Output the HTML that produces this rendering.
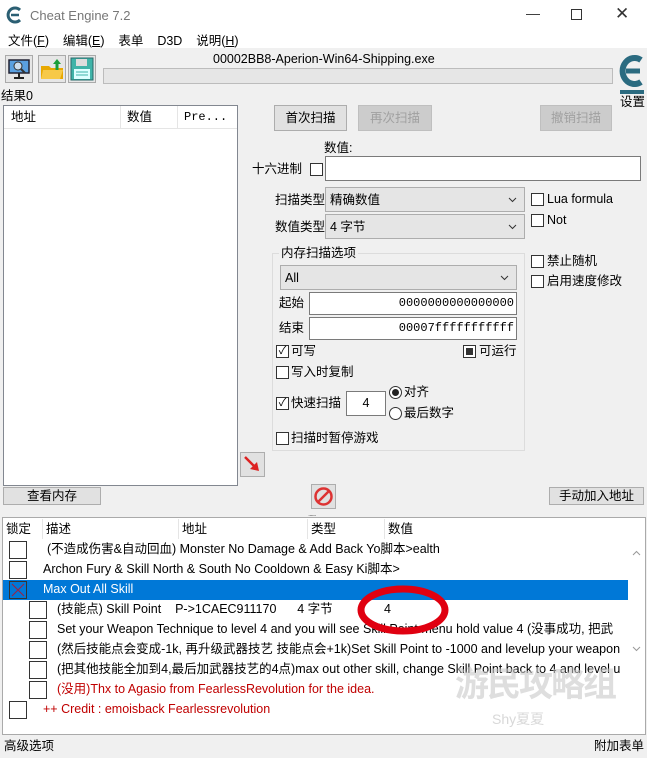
<!DOCTYPE html>
<html><head><meta charset="utf-8"><style>
*{margin:0;padding:0;box-sizing:border-box}
body{width:647px;height:758px;background:#f0f0f0;position:relative;overflow:hidden;font-family:"Liberation Sans","Noto Sans CJK SC",sans-serif;font-size:12.5px;color:#000}
.a{position:absolute;white-space:nowrap;line-height:15px}
.btn{position:absolute;background:#e1e1e1;border:1px solid #adadad;text-align:center}
.dis{color:#a0a0a0;background:#cccccc;border-color:#bfbfbf}
.cb{position:absolute;width:13px;height:13px;border:1px solid #333;background:#fff}
.in{position:absolute;background:#fff;border:1px solid #7a7a7a}
.sel{position:absolute;background:#e5e5e5;border:1px solid #adadad}
.sel svg{position:absolute;right:7px;top:9px}
.sel span{line-height:15px}
.rc{position:absolute;width:18px;height:18px;border:1px solid #333;background:#fff}
.row{position:absolute;left:0;height:20px;line-height:19px;white-space:nowrap}
</style></head><body>
<div class="a" style="left:0;top:0;width:647px;height:48px;background:#fff"></div>
<svg class="a" style="left:6px;top:6px" width="18" height="18" viewBox="0 0 18 18"><path d="M14 4 A7 7 0 1 0 14 14" stroke="#2b5f73" stroke-width="3" fill="none"/><path d="M5 9h8" stroke="#2b5f73" stroke-width="2.5"/></svg>
<div class="a" style="left:30px;top:8px;font-size:13px;color:#777">Cheat Engine 7.2</div>
<div class="a" style="left:526px;top:6px;font-size:14px;color:#333">—</div>
<div class="a" style="left:571px;top:9px;width:11px;height:11px;border:1px solid #333"></div>
<div class="a" style="left:615px;top:6px;font-size:17px;color:#333">✕</div>
<div class="a" style="left:8px;top:34px;font-size:12.5px">文件(<u>F</u>)&nbsp;&nbsp;&nbsp;&nbsp;编辑(<u>E</u>)&nbsp;&nbsp;&nbsp;&nbsp;表单&nbsp;&nbsp;&nbsp;&nbsp;D3D&nbsp;&nbsp;&nbsp;&nbsp;说明(<u>H</u>)</div>
<div class="a" style="left:5px;top:55px;width:28px;height:28px;border:1px solid #aaa;background:#e6e6e6"><svg width="26" height="26"><rect x="3" y="4" width="20" height="13" fill="#5aa0e0" stroke="#223" stroke-width="1.5"/><circle cx="12" cy="10" r="4" fill="#cde" stroke="#333"/><path d="M15 13l4 4" stroke="#333" stroke-width="2"/><path d="M13 17v4M8 22h10" stroke="#222" stroke-width="2"/></svg></div>
<div class="a" style="left:38px;top:55px;width:28px;height:28px;border:1px solid #aaa;background:#e6e6e6"><svg width="26" height="26"><path d="M2 10h8l2 2h12v11H2z" fill="#e8a800"/><path d="M4 14h20l-3 9H2z" fill="#f7c948"/><path d="M18 3l-4 5h2.5v6h3V8H22z" fill="#1a9e3a"/></svg></div>
<div class="a" style="left:68px;top:55px;width:28px;height:28px;border:1px solid #aaa;background:#e6e6e6"><svg width="26" height="26"><rect x="2" y="2" width="22" height="22" fill="#3fb3a8" stroke="#2a6a6a"/><rect x="7" y="3" width="11" height="7" fill="#ddd"/><rect x="5" y="13" width="16" height="10" fill="#dff"/><path d="M7 16h12M7 19h12" stroke="#3fb3a8"/></svg></div>
<div class="a" style="left:213px;top:52px;font-size:12.5px">00002BB8-Aperion-Win64-Shipping.exe</div>
<div class="a" style="left:103px;top:68px;width:510px;height:16px;background:#e6e6e6;border:1px solid #bcbcbc"></div>
<svg class="a" style="left:617px;top:52px" width="29" height="44" viewBox="0 0 29 44"><path d="M24 8 A12 13 0 1 0 24 30" stroke="#2b6b80" stroke-width="6" fill="none"/><path d="M9 19h14" stroke="#2b6b80" stroke-width="5"/><rect x="3" y="38" width="24" height="4" fill="#2b6b80"/></svg>
<div class="a" style="left:620px;top:95px;font-size:12.5px">设置</div>
<div class="a" style="left:1px;top:89px">结果0</div>
<div class="a" style="left:3px;top:105px;width:235px;height:381px;background:#fff;border:1px solid #828790"></div>
<div class="a" style="left:4px;top:106px;width:233px;height:23px;background:#fff;border-bottom:1px solid #e5e5e5"></div>
<div class="a" style="left:120px;top:106px;width:1px;height:22px;background:#e5e5e5"></div>
<div class="a" style="left:177px;top:106px;width:1px;height:22px;background:#e5e5e5"></div>
<div class="a" style="left:11px;top:110px">地址</div>
<div class="a" style="left:127px;top:110px">数值</div>
<div class="a" style="left:184px;top:110px;font-family:'Liberation Mono',monospace;font-size:12px">Pre...</div>
<div class="btn" style="left:274px;top:105px;width:73px;height:26px;line-height:24px">首次扫描</div>
<div class="btn dis" style="left:358px;top:105px;width:74px;height:26px;line-height:24px">再次扫描</div>
<div class="btn dis" style="left:540px;top:105px;width:72px;height:26px;line-height:24px">撤销扫描</div>
<div class="a" style="left:324px;top:141px">数值:</div>
<div class="a" style="left:252px;top:162px">十六进制</div>
<div class="cb" style="left:310px;top:163px"></div>
<div class="in" style="left:325px;top:156px;width:316px;height:25px"></div>
<div class="a" style="left:275px;top:193px">扫描类型</div>
<div class="sel" style="left:325px;top:187px;width:200px;height:25px"><span style="position:absolute;left:4px;top:5px">精确数值</span><svg width="9" height="6"><path d="M1 1l3.5 3.5L8 1" stroke="#333" fill="none"/></svg></div>
<div class="a" style="left:275px;top:220px">数值类型</div>
<div class="sel" style="left:325px;top:214px;width:200px;height:25px"><span style="position:absolute;left:4px;top:5px">4 字节</span><svg width="9" height="6"><path d="M1 1l3.5 3.5L8 1" stroke="#333" fill="none"/></svg></div>
<div class="cb" style="left:531px;top:193px"></div><div class="a" style="left:547px;top:192px">Lua formula</div>
<div class="cb" style="left:531px;top:214px"></div><div class="a" style="left:547px;top:213px">Not</div>
<div class="cb" style="left:531px;top:255px"></div><div class="a" style="left:547px;top:254px">禁止随机</div>
<div class="cb" style="left:531px;top:275px"></div><div class="a" style="left:547px;top:274px">启用速度修改</div>
<div class="a" style="left:272px;top:253px;width:253px;height:198px;border:1px solid #dcdcdc"></div>
<div class="a" style="left:279px;top:246px;background:#f0f0f0;padding:0 2px">内存扫描选项</div>
<div class="sel" style="left:280px;top:265px;width:237px;height:25px"><span style="position:absolute;left:4px;top:5px">All</span><svg width="9" height="6"><path d="M1 1l3.5 3.5L8 1" stroke="#333" fill="none"/></svg></div>
<div class="a" style="left:279px;top:296px">起始</div>
<div class="in" style="left:309px;top:292px;width:208px;height:23px;font-family:'Liberation Mono',monospace;font-size:12px;text-align:right;padding-right:2px;line-height:21px">0000000000000000</div>
<div class="a" style="left:279px;top:321px">结束</div>
<div class="in" style="left:309px;top:317px;width:208px;height:23px;font-family:'Liberation Mono',monospace;font-size:12px;text-align:right;padding-right:2px;line-height:21px">00007fffffffffff</div>
<div class="cb" style="left:276px;top:345px;font-size:11px;line-height:11px;text-align:center">✓</div><div class="a" style="left:291px;top:344px">可写</div>
<div class="cb" style="left:463px;top:345px"><div style="margin:2px;width:7px;height:7px;background:#333"></div></div><div class="a" style="left:479px;top:344px">可运行</div>
<div class="cb" style="left:276px;top:366px"></div><div class="a" style="left:291px;top:365px">写入时复制</div>
<div class="cb" style="left:276px;top:397px;font-size:11px;line-height:11px;text-align:center">✓</div><div class="a" style="left:291px;top:396px">快速扫描</div>
<div class="in" style="left:346px;top:391px;width:40px;height:25px;text-align:center;line-height:23px">4</div>
<div class="a" style="left:389px;top:386px;width:13px;height:13px;border-radius:50%;border:1px solid #333;background:#fff"><div style="margin:2px;width:7px;height:7px;border-radius:50%;background:#222"></div></div><div class="a" style="left:404px;top:385px">对齐</div>
<div class="a" style="left:389px;top:407px;width:13px;height:13px;border-radius:50%;border:1px solid #333;background:#fff"></div><div class="a" style="left:404px;top:406px">最后数字</div>
<div class="cb" style="left:276px;top:432px"></div><div class="a" style="left:291px;top:431px">扫描时暂停游戏</div>
<div class="btn" style="left:240px;top:452px;width:25px;height:25px"><svg width="23" height="23"><path d="M4 4l12 12" stroke="#d22" stroke-width="2.5"/><path d="M18 18l-9-2 7-7z" fill="#d22"/></svg></div>
<div class="btn" style="left:3px;top:487px;width:98px;height:18px;line-height:16px">查看内存</div>
<div class="btn" style="left:311px;top:484px;width:25px;height:25px"><svg width="23" height="23"><circle cx="11.5" cy="11.5" r="8" stroke="#d33" stroke-width="2.5" fill="none"/><path d="M6 17L17 6" stroke="#d33" stroke-width="2.5"/></svg></div>
<div class="btn" style="left:549px;top:487px;width:95px;height:18px;line-height:16px">手动加入地址</div>
<div class="a" style="left:308px;top:512px;font-size:8px;letter-spacing:-1px;color:#777;line-height:4px">......</div>
<div class="a" style="left:2px;top:517px;width:644px;height:218px;background:#fff;border:1px solid #aaa"></div>
<div class="a" style="left:42px;top:519px;width:1px;height:20px;background:#e5e5e5"></div>
<div class="a" style="left:178px;top:519px;width:1px;height:20px;background:#e5e5e5"></div>
<div class="a" style="left:307px;top:519px;width:1px;height:20px;background:#e5e5e5"></div>
<div class="a" style="left:384px;top:519px;width:1px;height:20px;background:#e5e5e5"></div>
<div class="a" style="left:6px;top:522px">锁定</div><div class="a" style="left:46px;top:522px">描述</div><div class="a" style="left:182px;top:522px">地址</div><div class="a" style="left:311px;top:522px">类型</div><div class="a" style="left:388px;top:522px">数值</div>
<div class="a" style="left:628px;top:540px;width:17px;height:120px;background:#fff"><svg style="position:absolute;left:4px;top:10px" width="9" height="6"><path d="M1 5l3.5-3.5L8 5" stroke="#999" fill="none"/></svg><svg style="position:absolute;left:4px;top:106px" width="9" height="6"><path d="M1 1l3.5 3.5L8 1" stroke="#999" fill="none"/></svg></div>
<div class="a" style="left:3px;top:580px;width:625px;height:20px;background:#0078d7"></div>
<div class="rc" style="left:9px;top:541px"></div><div class="row" style="left:47px;top:540px">(不造成伤害&amp;自动回血) Monster No Damage &amp; Add Back Yo脚本>ealth</div>
<div class="rc" style="left:9px;top:561px"></div><div class="row" style="left:43px;top:560px">Archon Fury &amp; Skill North &amp; South No Cooldown &amp; Easy Ki脚本&gt;</div>
<div class="rc" style="left:9px;top:581px;background:#0078d7;border-color:#333"><svg width="16" height="16"><path d="M2 2l12 12M14 2L2 14" stroke="#a02040" stroke-width="1"/></svg></div><div class="row" style="left:43px;top:580px;color:#fff">Max Out All Skill</div>
<div class="rc" style="left:29px;top:601px"></div><div class="row" style="left:57px;top:600px">(技能点) Skill Point&nbsp;&nbsp;&nbsp;&nbsp;P-&gt;1CAEC911170&nbsp;&nbsp;&nbsp;&nbsp;&nbsp;&nbsp;4 字节</div><div class="row" style="left:384px;top:600px">4</div>
<div class="rc" style="left:29px;top:621px"></div><div class="row" style="left:57px;top:620px">Set your Weapon Technique to level 4 and you will see Skill Point menu hold value 4 (没事成功, 把武</div>
<div class="rc" style="left:29px;top:641px"></div><div class="row" style="left:57px;top:640px">(然后技能点会变成-1k, 再升级武器技艺 技能点会+1k)Set Skill Point to -1000 and levelup your weapon</div>
<div class="rc" style="left:29px;top:661px"></div><div class="row" style="left:57px;top:660px">(把其他技能全加到4,最后加武器技艺的4点)max out other skill, change Skill Point back to 4 and level u</div>
<div class="rc" style="left:29px;top:681px"></div><div class="row" style="left:57px;top:680px;color:#c00000">(没用)Thx to Agasio from FearlessRevolution for the idea.</div>
<div class="rc" style="left:9px;top:701px"></div><div class="row" style="left:43px;top:700px;color:#c00000">++ Credit : emoisback Fearlessrevolution</div>
<div class="a" style="left:628px;top:540px;width:2px;height:120px;background:#fff"></div>
<div class="a" style="left:455px;top:665px;font-size:34px;line-height:40px;font-weight:bold;color:rgba(200,200,200,.6);letter-spacing:-2px">游民攻略组</div>
<div class="a" style="left:492px;top:712px;font-size:14px;color:rgba(200,200,200,.7)">Shy夏夏</div>
<svg class="a" style="left:356px;top:584px" width="95" height="52"><ellipse cx="47" cy="26" rx="42" ry="21" stroke="#e00010" stroke-width="7" fill="none"/></svg>
<div class="a" style="left:4px;top:739px">高级选项</div>
<div class="a" style="left:594px;top:739px">附加表单</div>
</body></html>
